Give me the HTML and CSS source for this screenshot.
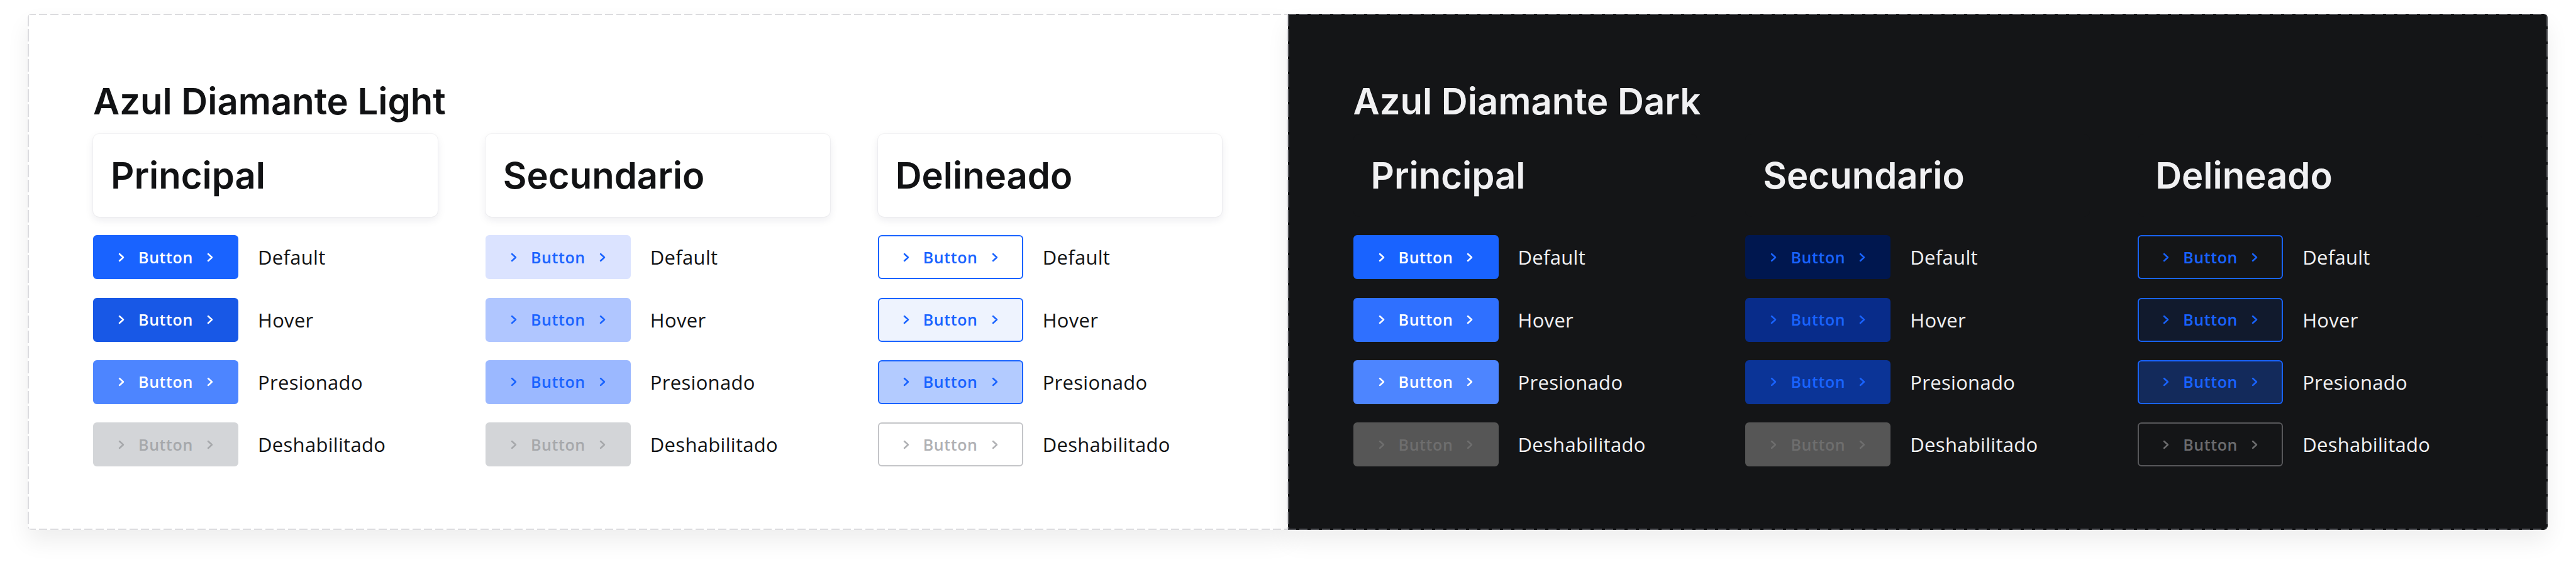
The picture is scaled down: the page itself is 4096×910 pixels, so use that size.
FILE: index.html
```html
<!DOCTYPE html>
<html lang="es">
<head>
<meta charset="utf-8">
<title>Azul Diamante</title>
<link rel="stylesheet" href="styles.css">
</head>
<body>
<div class="canvas">
  <section class="panel light">
    <h1 class="title">Azul Diamante Light</h1>
    <div class="cols">
      <div class="col">
        <div class="card"><h2 class="heading">Principal</h2></div>
        <div class="row"><button class="btn p-default"><svg class="chev" viewBox="0 0 10 14"><polyline points="2,1.5 8,7 2,12.5"/></svg><span>Button</span><svg class="chev" viewBox="0 0 10 14"><polyline points="2,1.5 8,7 2,12.5"/></svg></button><span class="label">Default</span></div>
        <div class="row"><button class="btn p-hover"><svg class="chev" viewBox="0 0 10 14"><polyline points="2,1.5 8,7 2,12.5"/></svg><span>Button</span><svg class="chev" viewBox="0 0 10 14"><polyline points="2,1.5 8,7 2,12.5"/></svg></button><span class="label">Hover</span></div>
        <div class="row"><button class="btn p-pressed"><svg class="chev" viewBox="0 0 10 14"><polyline points="2,1.5 8,7 2,12.5"/></svg><span>Button</span><svg class="chev" viewBox="0 0 10 14"><polyline points="2,1.5 8,7 2,12.5"/></svg></button><span class="label">Presionado</span></div>
        <div class="row"><button class="btn l-disabled"><svg class="chev" viewBox="0 0 10 14"><polyline points="2,1.5 8,7 2,12.5"/></svg><span>Button</span><svg class="chev" viewBox="0 0 10 14"><polyline points="2,1.5 8,7 2,12.5"/></svg></button><span class="label">Deshabilitado</span></div>
      </div>
      <div class="col">
        <div class="card"><h2 class="heading">Secundario</h2></div>
        <div class="row"><button class="btn ls-default"><svg class="chev" viewBox="0 0 10 14"><polyline points="2,1.5 8,7 2,12.5"/></svg><span>Button</span><svg class="chev" viewBox="0 0 10 14"><polyline points="2,1.5 8,7 2,12.5"/></svg></button><span class="label">Default</span></div>
        <div class="row"><button class="btn ls-hover"><svg class="chev" viewBox="0 0 10 14"><polyline points="2,1.5 8,7 2,12.5"/></svg><span>Button</span><svg class="chev" viewBox="0 0 10 14"><polyline points="2,1.5 8,7 2,12.5"/></svg></button><span class="label">Hover</span></div>
        <div class="row"><button class="btn ls-pressed"><svg class="chev" viewBox="0 0 10 14"><polyline points="2,1.5 8,7 2,12.5"/></svg><span>Button</span><svg class="chev" viewBox="0 0 10 14"><polyline points="2,1.5 8,7 2,12.5"/></svg></button><span class="label">Presionado</span></div>
        <div class="row"><button class="btn l-disabled"><svg class="chev" viewBox="0 0 10 14"><polyline points="2,1.5 8,7 2,12.5"/></svg><span>Button</span><svg class="chev" viewBox="0 0 10 14"><polyline points="2,1.5 8,7 2,12.5"/></svg></button><span class="label">Deshabilitado</span></div>
      </div>
      <div class="col">
        <div class="card"><h2 class="heading">Delineado</h2></div>
        <div class="row"><button class="btn lo-default"><svg class="chev" viewBox="0 0 10 14"><polyline points="2,1.5 8,7 2,12.5"/></svg><span>Button</span><svg class="chev" viewBox="0 0 10 14"><polyline points="2,1.5 8,7 2,12.5"/></svg></button><span class="label">Default</span></div>
        <div class="row"><button class="btn lo-hover"><svg class="chev" viewBox="0 0 10 14"><polyline points="2,1.5 8,7 2,12.5"/></svg><span>Button</span><svg class="chev" viewBox="0 0 10 14"><polyline points="2,1.5 8,7 2,12.5"/></svg></button><span class="label">Hover</span></div>
        <div class="row"><button class="btn lo-pressed"><svg class="chev" viewBox="0 0 10 14"><polyline points="2,1.5 8,7 2,12.5"/></svg><span>Button</span><svg class="chev" viewBox="0 0 10 14"><polyline points="2,1.5 8,7 2,12.5"/></svg></button><span class="label">Presionado</span></div>
        <div class="row"><button class="btn lo-disabled"><svg class="chev" viewBox="0 0 10 14"><polyline points="2,1.5 8,7 2,12.5"/></svg><span>Button</span><svg class="chev" viewBox="0 0 10 14"><polyline points="2,1.5 8,7 2,12.5"/></svg></button><span class="label">Deshabilitado</span></div>
      </div>
    </div>
  </section>
  <section class="panel dark">
    <h1 class="title">Azul Diamante Dark</h1>
    <div class="cols">
      <div class="col">
        <div class="card"><h2 class="heading">Principal</h2></div>
        <div class="row"><button class="btn p-default"><svg class="chev" viewBox="0 0 10 14"><polyline points="2,1.5 8,7 2,12.5"/></svg><span>Button</span><svg class="chev" viewBox="0 0 10 14"><polyline points="2,1.5 8,7 2,12.5"/></svg></button><span class="label">Default</span></div>
        <div class="row"><button class="btn dp-hover"><svg class="chev" viewBox="0 0 10 14"><polyline points="2,1.5 8,7 2,12.5"/></svg><span>Button</span><svg class="chev" viewBox="0 0 10 14"><polyline points="2,1.5 8,7 2,12.5"/></svg></button><span class="label">Hover</span></div>
        <div class="row"><button class="btn p-pressed"><svg class="chev" viewBox="0 0 10 14"><polyline points="2,1.5 8,7 2,12.5"/></svg><span>Button</span><svg class="chev" viewBox="0 0 10 14"><polyline points="2,1.5 8,7 2,12.5"/></svg></button><span class="label">Presionado</span></div>
        <div class="row"><button class="btn d-disabled"><svg class="chev" viewBox="0 0 10 14"><polyline points="2,1.5 8,7 2,12.5"/></svg><span>Button</span><svg class="chev" viewBox="0 0 10 14"><polyline points="2,1.5 8,7 2,12.5"/></svg></button><span class="label">Deshabilitado</span></div>
      </div>
      <div class="col">
        <div class="card"><h2 class="heading">Secundario</h2></div>
        <div class="row"><button class="btn ds-default"><svg class="chev" viewBox="0 0 10 14"><polyline points="2,1.5 8,7 2,12.5"/></svg><span>Button</span><svg class="chev" viewBox="0 0 10 14"><polyline points="2,1.5 8,7 2,12.5"/></svg></button><span class="label">Default</span></div>
        <div class="row"><button class="btn ds-hover"><svg class="chev" viewBox="0 0 10 14"><polyline points="2,1.5 8,7 2,12.5"/></svg><span>Button</span><svg class="chev" viewBox="0 0 10 14"><polyline points="2,1.5 8,7 2,12.5"/></svg></button><span class="label">Hover</span></div>
        <div class="row"><button class="btn ds-pressed"><svg class="chev" viewBox="0 0 10 14"><polyline points="2,1.5 8,7 2,12.5"/></svg><span>Button</span><svg class="chev" viewBox="0 0 10 14"><polyline points="2,1.5 8,7 2,12.5"/></svg></button><span class="label">Presionado</span></div>
        <div class="row"><button class="btn d-disabled"><svg class="chev" viewBox="0 0 10 14"><polyline points="2,1.5 8,7 2,12.5"/></svg><span>Button</span><svg class="chev" viewBox="0 0 10 14"><polyline points="2,1.5 8,7 2,12.5"/></svg></button><span class="label">Deshabilitado</span></div>
      </div>
      <div class="col">
        <div class="card"><h2 class="heading">Delineado</h2></div>
        <div class="row"><button class="btn do-default"><svg class="chev" viewBox="0 0 10 14"><polyline points="2,1.5 8,7 2,12.5"/></svg><span>Button</span><svg class="chev" viewBox="0 0 10 14"><polyline points="2,1.5 8,7 2,12.5"/></svg></button><span class="label">Default</span></div>
        <div class="row"><button class="btn do-hover"><svg class="chev" viewBox="0 0 10 14"><polyline points="2,1.5 8,7 2,12.5"/></svg><span>Button</span><svg class="chev" viewBox="0 0 10 14"><polyline points="2,1.5 8,7 2,12.5"/></svg></button><span class="label">Hover</span></div>
        <div class="row"><button class="btn do-pressed"><svg class="chev" viewBox="0 0 10 14"><polyline points="2,1.5 8,7 2,12.5"/></svg><span>Button</span><svg class="chev" viewBox="0 0 10 14"><polyline points="2,1.5 8,7 2,12.5"/></svg></button><span class="label">Presionado</span></div>
        <div class="row"><button class="btn do-disabled"><svg class="chev" viewBox="0 0 10 14"><polyline points="2,1.5 8,7 2,12.5"/></svg><span>Button</span><svg class="chev" viewBox="0 0 10 14"><polyline points="2,1.5 8,7 2,12.5"/></svg></button><span class="label">Deshabilitado</span></div>
      </div>
    </div>
  </section>
</div>
</body>
</html>
```
FILE: styles.css
```css
* { box-sizing: border-box; }
html, body { margin: 0; padding: 0; background: #ffffff; }
body { width: 4096px; height: 910px; overflow: hidden; }

.canvas {
  display: flex;
  padding: 22px 45px 0 44px;
}

.panel {
  flex: 1 1 0;
  padding: 104px 104px 101px 104px;
  --dash: #dcdcdf;
  background:
    repeating-linear-gradient(90deg, var(--dash) 0 13px, transparent 13px 18px) left top / 100% 2px no-repeat,
    repeating-linear-gradient(90deg, var(--dash) 0 13px, transparent 13px 18px) left bottom / 100% 2px no-repeat,
    repeating-linear-gradient(180deg, var(--dash) 0 20px, transparent 20px 24px) left top / 2px 100% no-repeat,
    repeating-linear-gradient(180deg, var(--dash) 0 20px, transparent 20px 24px) right top / 2px 100% no-repeat,
    var(--bg);
  box-shadow: 0 18px 36px rgba(0, 0, 0, 0.07);
}
.panel.light { --bg: #ffffff; border-radius: 6px 0 0 6px; color: #111214; }
.panel.dark { --bg: #141517; --dash: #55565a; border-radius: 0 6px 6px 0; color: #f1f1f3; }

.title {
  margin: 0 0 17px 0;
  font-family: Inter, "Liberation Sans", sans-serif;
  font-weight: 600;
  font-size: 58px;
  line-height: 70px;
  letter-spacing: 0;
}

.cols {
  display: flex;
  gap: 76px;
}
.col {
  flex: 1 1 0;
  display: flex;
  flex-direction: column;
  gap: 29.3px;
}

.card {
  height: 132px;
  padding: 31px 28px;
  border-radius: 10px;
  background: #ffffff;
  box-shadow: 0 0 0 1px rgba(20, 30, 60, 0.04), 0 5px 14px rgba(20, 30, 60, 0.08);
}
.dark .card {
  background: #141517;
  box-shadow: none;
}
.heading {
  margin: 0;
  font-family: Inter, "Liberation Sans", sans-serif;
  font-weight: 600;
  font-size: 58px;
  line-height: 70px;
  letter-spacing: 0;
}

.row {
  display: flex;
  align-items: center;
  height: 70px;
}

.btn {
  width: 231px;
  height: 70px;
  flex: none;
  display: flex;
  align-items: center;
  justify-content: center;
  gap: 22px;
  border: 2px solid transparent;
  border-radius: 6px;
  padding: 0;
  font-family: "Open Sans", "Noto Sans", sans-serif;
  font-weight: 600;
  font-size: 25px;
  letter-spacing: 0.6px;
  color: #ffffff;
  background: #1963ff;
}
.btn span { line-height: 1; }
.chev {
  width: 10px;
  height: 15px;
  fill: none;
  stroke: currentColor;
  stroke-width: 2.5;
  stroke-linecap: round;
  stroke-linejoin: round;
}

.label {
  margin-left: 31px;
  font-family: "Open Sans", "Noto Sans", sans-serif;
  font-size: 31px;
  font-weight: 400;
  letter-spacing: 0.3px;
}

/* Principal */
.p-default { background: #1963ff; border-color: #1963ff; }
.p-hover { background: #1858e6; border-color: #1858e6; }
.p-pressed { background: #4d85ff; border-color: #4d85ff; }
.dp-hover { background: #2f70ff; border-color: #2f70ff; }

/* Disabled */
.l-disabled { background: #d3d5d8; border-color: #d3d5d8; color: #a6a8ab; }
.d-disabled { background: #565656; border-color: #565656; color: #6e6e6e; }

/* Light secondary */
.ls-default { background: #dbe3ff; border-color: #dbe3ff; color: #1963ff; }
.ls-hover { background: #b0c6ff; border-color: #b0c6ff; color: #1963ff; }
.ls-pressed { background: #9bb8ff; border-color: #9bb8ff; color: #1963ff; }

/* Light outline */
.lo-default { background: #ffffff; border-color: #1963ff; color: #1963ff; }
.lo-hover { background: #eef3fe; border-color: #1963ff; color: #1963ff; }
.lo-pressed { background: #b3cbff; border-color: #1963ff; color: #1963ff; }
.lo-disabled { background: #ffffff; border-color: #c4c5c8; color: #b0b1b4; }

/* Dark secondary */
.ds-default { background: #00174f; border-color: #00174f; color: #1963ff; }
.ds-hover { background: #082c8a; border-color: #082c8a; color: #1963ff; }
.ds-pressed { background: #0b3497; border-color: #0b3497; color: #1963ff; }

/* Dark outline */
.do-default { background: #141517; border-color: #1963ff; color: #1963ff; }
.do-hover { background: #111a2d; border-color: #1963ff; color: #1963ff; }
.do-pressed { background: #132a5b; border-color: #1963ff; color: #1963ff; }
.do-disabled { background: #141517; border-color: #58585b; color: #6c6c6e; }
```
